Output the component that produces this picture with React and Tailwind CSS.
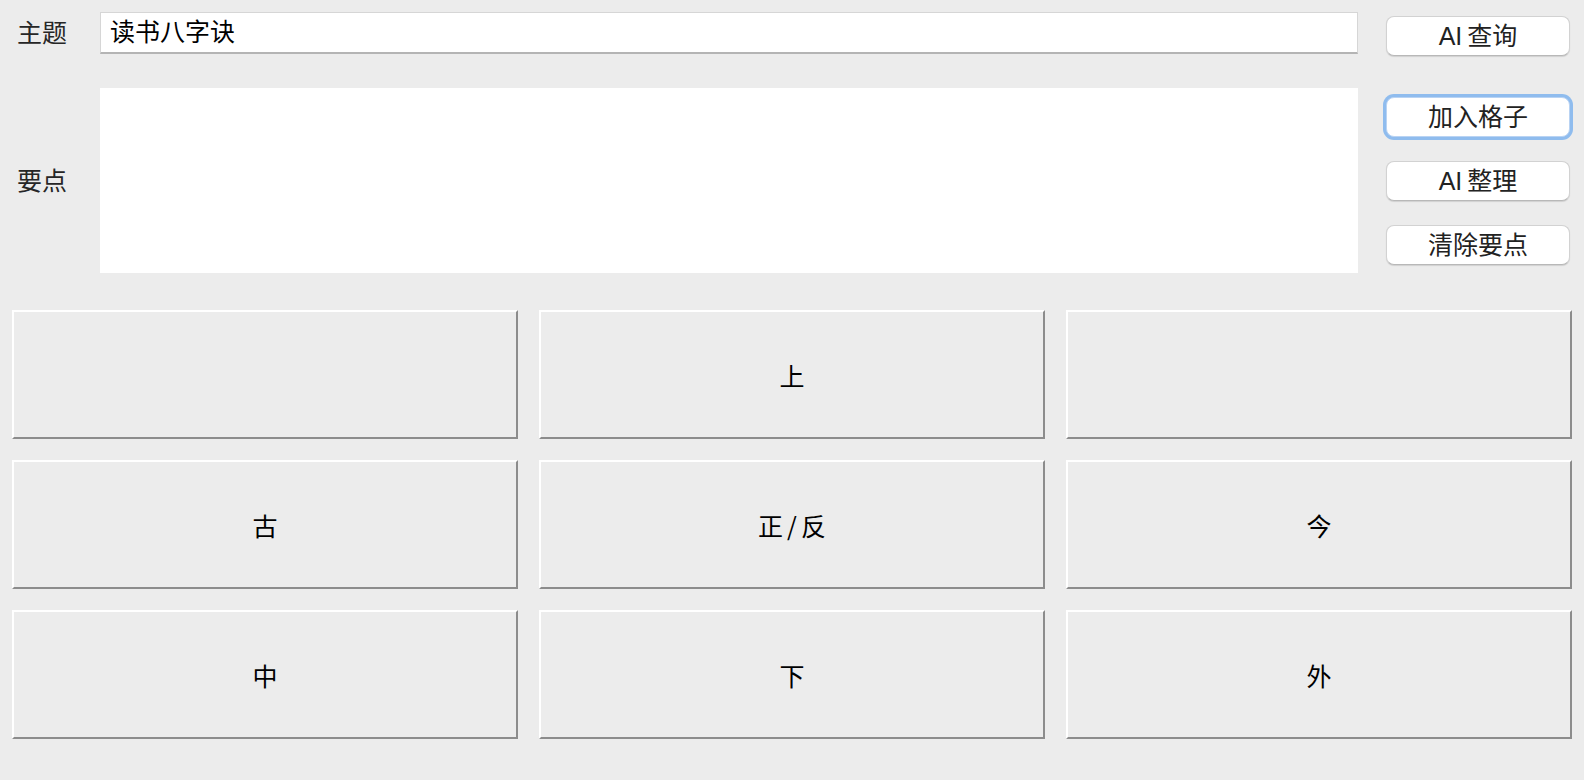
import React from 'react';

const font = { fontFamily: '"Liberation Sans", "Noto Sans CJK SC", sans-serif' };
const cjk = { fontFamily: '"Noto Sans CJK SC", sans-serif' };

const SideButton = ({ children, focused, className = '' }) => (
  <button
    className={
      'h-[40px] w-[184px] rounded-[8px] bg-white text-[25px] leading-none text-[#222] ' +
      (focused
        ? 'border border-[#b9d3f3] shadow-[0_0_0_3px_#8fbcee] '
        : 'border border-[#d2d2d2] border-b-[#b8b8b8] shadow-[0_1px_1px_rgba(0,0,0,0.12)] ') +
      className
    }
  >
    {children}
  </button>
);

const Cell = ({ label }) => (
  <div
    className="h-[129px] flex items-center justify-center pt-[3px] border-2 border-t-white border-l-white border-r-[#8c8c8c] border-b-[#8c8c8c] bg-[#ececec] text-[25px] text-black"
    style={cjk}
  >
    {label.includes('/') ? (
      <>
        {label.split('/')[0]}
        <span className="mx-[4px]">/</span>
        {label.split('/')[1]}
      </>
    ) : (
      label
    )}
  </div>
);

export default function App() {
  const cells = ['', '上', '', '古', '正/反', '今', '中', '下', '外'];

  return (
    <div className="w-[1584px] h-[780px] bg-[#ececec] flex flex-col overflow-hidden" style={font}>
      <div className="flex pt-[12px]">
        {/* 标签 */}
        <div className="w-[100px] flex flex-col text-[25px] text-[#262626]">
          <div className="h-[42px] flex items-center pl-[17px] pt-[2px]">主题</div>
          <div className="h-[185px] mt-[34px] flex items-center pl-[17px] pt-[2px]">要点</div>
        </div>

        {/* 输入区 */}
        <div className="w-[1258px] flex flex-col">
          <div className="h-[42px] bg-white border border-[#d6d6d6] border-b-2 border-b-[#b4b4b4] flex items-center pl-[9px] pt-[1px] text-[25px] text-black">
            读书八字诀
          </div>
          <div className="h-[185px] mt-[34px] bg-white"></div>
        </div>

        {/* 按钮 */}
        <div className="ml-[28px] flex flex-col pt-[4px]">
          <SideButton>
            <span className="mr-[5px]">AI</span>查询
          </SideButton>
          <SideButton focused className="mt-[41px]">
            加入格子
          </SideButton>
          <SideButton className="mt-[24px]">
            <span className="mr-[5px]">AI</span>整理
          </SideButton>
          <SideButton className="mt-[24px]">清除要点</SideButton>
        </div>
      </div>

      <div className="mt-[37px] px-[12px] grid grid-cols-3 gap-x-[21px] gap-y-[21px]">
        {cells.map((c, i) => (
          <Cell key={i} label={c} />
        ))}
      </div>
    </div>
  );
}
